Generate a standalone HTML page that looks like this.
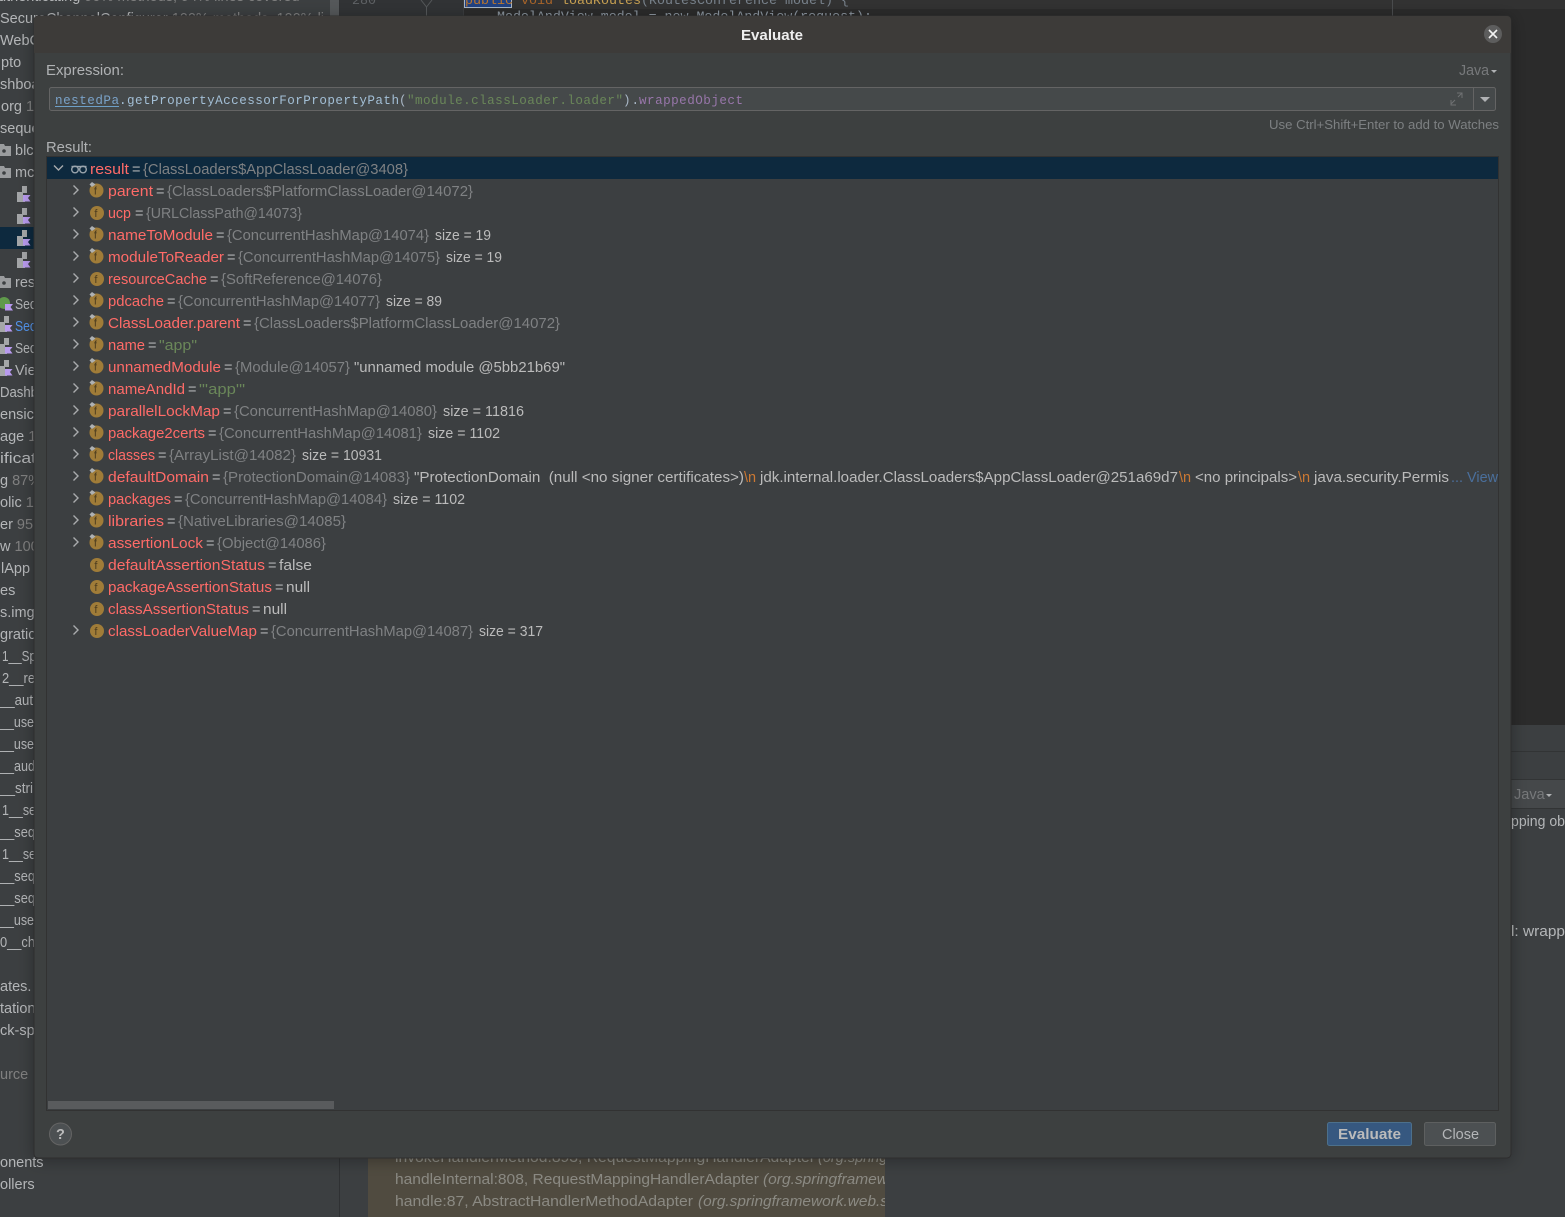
<!DOCTYPE html>
<html><head><meta charset="utf-8"><title>Evaluate</title>
<style>
html,body{margin:0;padding:0;background:#3c3f41;width:1565px;height:1217px;overflow:hidden}
svg{display:block;position:absolute;left:0;top:0}
text{font-family:"Liberation Sans","DejaVu Sans",sans-serif;font-size:14.5px;white-space:pre}
.t{fill:#b4b6b8}.g{fill:#808080}.d{fill:#7d8082}
.n{fill:#ff6b68}.e{fill:#b0b2b4}.v{fill:#7f8183}.s{fill:#bbbbbb}.q{fill:#6a8759}.o{fill:#cc7832}
.m{font-family:"Liberation Mono",monospace;font-size:12.6px}
.ed{font-family:"Liberation Mono",monospace;font-size:13.33px}
</style></head><body>
<svg width="1565" height="1217" viewBox="0 0 1565 1217" xmlns="http://www.w3.org/2000/svg">
<defs>
<filter id="sh" x="-3%" y="-3%" width="106%" height="106%"><feDropShadow dx="0" dy="2" stdDeviation="8" flood-color="#000" flood-opacity=".3"/></filter>
<g id="fi"><circle cx="0" cy="0" r="7" fill="#a07c38"/><text x="-2.6" y="4.200" style="font-size:11px" fill="#4d3d1f">f</text></g>
<g id="fp"><circle cx="-0.500" cy="-0.500" r="7" fill="#a07c38"/><text x="-3.100" y="3.700" style="font-size:11px" fill="#4d3d1f">f</text><path d="M-7.500-6.500l2.500-2.500 3.500 2.500-3.500 2.500z" fill="#aeb1b3"/></g>
<path id="ch" d="M-3-4.500l4.500 4.500-4.500 4.500" fill="none" stroke="#a9abad" stroke-width="1.4"/>
<g id="cl"><path d="M5 0h5v7H6v3h2v6H0V6h5z" fill="#a4a6a8"/><path d="M6 9h7.500l-2.500 3 2.500 3.500H6z" fill="#b89aee"/></g>
<g id="fo"><path d="M-1 0h5l1 2h6v10H-1z" fill="#9a9c9e"/><circle cx="4" cy="7" r="1.800" fill="#3c3f41"/></g>
</defs>

<!-- background -->
<rect width="1565" height="1217" fill="#3c3f41"/>
<rect x="330" y="0" width="9" height="16" fill="#55585a"/>
<rect x="339" y="0" width="1" height="1217" fill="#2f3133"/>
<rect x="340" y="0" width="1225" height="725" fill="#2b2b2b"/>
<rect x="340" y="0" width="1225" height="9" fill="#323232"/>
<rect x="340" y="0" width="123" height="16" fill="#313335"/>
<rect x="463" y="0" width="1" height="16" fill="#3a3c3e"/>
<rect x="1392" y="0" width="1" height="16" fill="#4a4c4e"/>
<rect x="464.500" y="-4" width="47" height="11.500" fill="#214283" stroke="#a9b7c6"/>
<text class="ed" x="465" y="4" fill="#b9762f">public</text>
<text class="ed" x="521" y="4" fill="#a8652a">void</text>
<text class="ed" x="561" y="4" fill="#c7a052">loadRoutes</text>
<text class="ed" x="641" y="4" fill="#78828c">(RoutesConference model) {</text>
<text class="ed" x="497" y="20" textLength="375" lengthAdjust="spacing" fill="#8c96a0">ModelAndView model = new ModelAndView(request);</text>
<text class="ed" x="352" y="4" fill="#606366">280</text>
<text class="ed" x="352" y="24" fill="#606366">281</text>
<path d="M421 0l5.500 7 5.500-7M426.500 7v9" fill="none" stroke="#55585a"/>
<rect x="1511" y="725" width="54" height="492" fill="#3c3f41"/>
<rect x="1511" y="751" width="54" height="1" fill="#323435"/>
<rect x="1511" y="779" width="54" height="29" fill="#45484a"/>
<rect x="1511" y="779" width="54" height="1" fill="#323435"/>
<rect x="1511" y="808" width="54" height="1" fill="#323435"/>
<text x="1514" y="799" fill="#77797b">Java</text><path d="M1546 794h6l-3 3z" fill="#b0b2b4"/>
<text class="t" x="1511" y="826" textLength="54" lengthAdjust="spacingAndGlyphs">pping ob</text>
<text class="t" x="1511" y="936" textLength="54" lengthAdjust="spacingAndGlyphs">l: wrapp</text>
<rect x="368" y="1150" width="517" height="67" fill="#504b40"/>
<g fill="#8b8a83">
<text x="395" y="1162" textLength="420" lengthAdjust="spacingAndGlyphs">invokeHandlerMethod:893, RequestMappingHandlerAdapter</text>
<text x="395" y="1184" textLength="364" lengthAdjust="spacingAndGlyphs">handleInternal:808, RequestMappingHandlerAdapter</text>
<text x="763" y="1184" font-style="italic" textLength="125" lengthAdjust="spacingAndGlyphs">(org.springframew</text>
<text x="395" y="1206" textLength="298" lengthAdjust="spacingAndGlyphs">handle:87, AbstractHandlerMethodAdapter</text>
<text x="698" y="1206" font-style="italic" textLength="190" lengthAdjust="spacingAndGlyphs">(org.springframework.web.s</text>
<text x="818" y="1162" font-style="italic">(org.spring</text>
</g>
<rect x="885" y="1150" width="680" height="67" fill="#3c3f41"/>

<!-- left tree -->
<rect x="0" y="227" width="34" height="22" fill="#0d293e"/>
<g class="t">
<text x="-10" y="1">authenticating <tspan fill="#808080">90% methods, 94% lines covered</tspan></text>
<text x="0" y="23">SecureChannelConfigurer <tspan fill="#808080">100% methods, 100% li</tspan></text>
<text x="0" y="45">WebC</text><text x="1" y="67">pto</text><text x="0" y="89">shboa</text><text x="1" y="111">org <tspan fill="#808080">1</tspan></text><text x="0" y="133">seque</text>
<text x="15" y="155">blc</text><text x="15" y="177">mc</text><text x="15" y="287">res</text><text x="15" y="309" textLength="21" lengthAdjust="spacingAndGlyphs">Sec</text>
<text x="15" y="331" textLength="21" lengthAdjust="spacingAndGlyphs" fill="#5394ec">Sec</text>
<text x="15" y="353" textLength="21" lengthAdjust="spacingAndGlyphs">Sec</text><text x="15" y="375">Vie</text><text x="0" y="397" textLength="38" lengthAdjust="spacingAndGlyphs">Dashb</text><text x="0" y="419">ensic</text><text x="0" y="441">age <tspan fill="#808080">1</tspan></text><text x="0" y="463" textLength="36" lengthAdjust="spacingAndGlyphs">ificat</text><text x="0" y="485">g <tspan fill="#808080">87%</tspan></text><text x="0" y="507">olic <tspan fill="#808080">1</tspan></text><text x="0" y="529">er <tspan fill="#808080">95%</tspan></text><text x="0" y="551">w <tspan fill="#808080">100</tspan></text><text x="1" y="573">lApp</text><text x="0" y="595">es</text><text x="0" y="617">s.img</text><text x="0" y="639">gratic</text>
<text x="2" y="661" textLength="34" lengthAdjust="spacingAndGlyphs">1__Sp</text><text x="2" y="683" textLength="33" lengthAdjust="spacingAndGlyphs">2__re</text><text x="0" y="705" textLength="33" lengthAdjust="spacingAndGlyphs">__aut</text><text x="0" y="727" textLength="34" lengthAdjust="spacingAndGlyphs">__use</text><text x="0" y="749" textLength="34" lengthAdjust="spacingAndGlyphs">__use</text><text x="0" y="771" textLength="35" lengthAdjust="spacingAndGlyphs">__aud</text><text x="0" y="793" textLength="33" lengthAdjust="spacingAndGlyphs">__stri</text><text x="2" y="815" textLength="34" lengthAdjust="spacingAndGlyphs">1__se</text><text x="0" y="837" textLength="35" lengthAdjust="spacingAndGlyphs">__seq</text><text x="2" y="859" textLength="34" lengthAdjust="spacingAndGlyphs">1__se</text><text x="0" y="881" textLength="35" lengthAdjust="spacingAndGlyphs">__seq</text><text x="0" y="903" textLength="35" lengthAdjust="spacingAndGlyphs">__seq</text><text x="0" y="925" textLength="34" lengthAdjust="spacingAndGlyphs">__use</text><text x="0" y="947" textLength="35" lengthAdjust="spacingAndGlyphs">0__ch</text><text x="0" y="991">ates.</text><text x="0" y="1013">tation</text><text x="0" y="1035">ck-sp</text>
<text x="0" y="1167">onents</text><text x="0" y="1189">ollers</text>
</g>
<text x="0" y="1079" fill="#808080">urce</text>
<use href="#fo" x="0" y="144"/><use href="#fo" x="0" y="166"/><use href="#fo" x="0" y="276"/>
<use href="#cl" x="17" y="186"/><use href="#cl" x="17" y="208"/><use href="#cl" x="17" y="230"/><use href="#cl" x="17" y="252"/>
<circle cx="4" cy="303" r="6" fill="#5f9a4b"/><path d="M5 304h8l-2.500 3 2.500 3.500H5z" fill="#b89aee"/>
<use href="#cl" x="-1" y="316"/><use href="#cl" x="-1" y="338"/><use href="#cl" x="-1" y="360"/>

<!-- dialog -->
<g filter="url(#sh)"><rect x="34" y="16" width="1477" height="1142" rx="4" fill="#3c3f41" stroke="#2d2d2d"/></g>
<path d="M34 53V20a4 4 0 0 1 4-4h1469a4 4 0 0 1 4 4v33z" fill="#3d3b39"/>
<text x="741" y="40" textLength="62" lengthAdjust="spacingAndGlyphs" fill="#eeeeee" font-weight="bold">Evaluate</text>
<circle cx="1493" cy="34" r="9" fill="#5d5d5d"/><path d="M1489 30l8 8M1497 30l-8 8" stroke="#f2f2f2" stroke-width="1.600" fill="none"/>

<text x="46" y="75" textLength="78" lengthAdjust="spacingAndGlyphs" class="e">Expression:</text>
<text x="1459" y="75" textLength="30" lengthAdjust="spacingAndGlyphs" fill="#77797b">Java</text><path d="M1491 70h6l-3 3z" fill="#b0b2b4"/>

<rect x="49.500" y="87.500" width="1446" height="23" rx="2" fill="#45494a" stroke="#646464"/>
<rect x="1473" y="88" width="1" height="22" fill="#646464"/>
<path d="M1480 97h10l-5 5z" fill="#b0b2b4"/>
<path d="M1451 104l4-4M1451 100v5h5M1462 93l-4 4M1457 93h5v5" fill="none" stroke="#6f7173"/>
<text class="m" x="55" y="104" textLength="64" lengthAdjust="spacing" fill="#7aa2c8">nestedPa</text>
<rect x="55" y="106" width="64" height="1" fill="#6d9fc7"/>
<text class="m" x="119" y="104" textLength="280" lengthAdjust="spacing" fill="#a3bfd6">.getPropertyAccessorForPropertyPath</text>
<text class="m" x="399" y="104" textLength="8" fill="#a9b7c6">(</text>
<text class="m" x="407" y="104" textLength="216" lengthAdjust="spacing" fill="#6a8759">"module.classLoader.loader"</text>
<text class="m" x="623" y="104" textLength="16" lengthAdjust="spacing" fill="#a9b7c6">).</text>
<text class="m" x="639" y="104" textLength="104" lengthAdjust="spacing" fill="#9876aa">wrappedObject</text>
<text x="1269" y="129" textLength="230" lengthAdjust="spacingAndGlyphs" style="font-size:13px" fill="#7d8082">Use Ctrl+Shift+Enter to add to Watches</text>
<text x="46" y="152" textLength="46" lengthAdjust="spacingAndGlyphs" class="e">Result:</text>

<rect x="46.500" y="156.500" width="1452" height="954" fill="#3c3f41" stroke="#323232"/>
<rect x="47" y="157" width="1451" height="22" fill="#0d293e"/>
<rect x="48" y="1101" width="286" height="8" fill="#595b5d"/>

<!-- tree rows -->
<path d="M54 165.500l4.500 4.500 4.500-4.500" fill="none" stroke="#a9abad" stroke-width="1.400"/>
<g fill="none" stroke="#9aa5ad" stroke-width="1.400"><circle cx="75" cy="169.500" r="3.300"/><circle cx="83" cy="169.500" r="3.300"/><path d="M71.500 166.500h15"/></g>
<text class="n" x="90" y="174" textLength="39" lengthAdjust="spacingAndGlyphs">result</text><text class="e" x="132" y="174">=</text><text class="v" x="143" y="174" textLength="265" lengthAdjust="spacingAndGlyphs">{ClassLoaders$AppClassLoader@3408}</text>

<use href="#ch" x="76.500" y="190"/><use href="#fp" x="97" y="191"/><text class="n" x="108" y="196" textLength="45" lengthAdjust="spacingAndGlyphs">parent</text><text class="e" x="156" y="196">=</text><text class="v" x="167" y="196" textLength="306" lengthAdjust="spacingAndGlyphs">{ClassLoaders$PlatformClassLoader@14072}</text>

<use href="#ch" x="76.500" y="212"/><use href="#fi" x="97" y="213"/><text class="n" x="108" y="218" textLength="23" lengthAdjust="spacingAndGlyphs">ucp</text><text class="e" x="135" y="218">=</text><text class="v" x="146" y="218" textLength="156" lengthAdjust="spacingAndGlyphs">{URLClassPath@14073}</text>

<use href="#ch" x="76.500" y="234"/><use href="#fp" x="97" y="235"/><text class="n" x="108" y="240" textLength="105" lengthAdjust="spacingAndGlyphs">nameToModule</text><text class="e" x="216" y="240">=</text><text class="v" x="227" y="240" textLength="202" lengthAdjust="spacingAndGlyphs">{ConcurrentHashMap@14074}</text><text class="s" x="435" y="240" textLength="56" lengthAdjust="spacingAndGlyphs">size = 19</text>

<use href="#ch" x="76.500" y="256"/><use href="#fp" x="97" y="257"/><text class="n" x="108" y="262" textLength="116" lengthAdjust="spacingAndGlyphs">moduleToReader</text><text class="e" x="227" y="262">=</text><text class="v" x="238" y="262" textLength="202" lengthAdjust="spacingAndGlyphs">{ConcurrentHashMap@14075}</text><text class="s" x="446" y="262" textLength="56" lengthAdjust="spacingAndGlyphs">size = 19</text>

<use href="#ch" x="76.500" y="278"/><use href="#fi" x="97" y="279"/><text class="n" x="108" y="284" textLength="99" lengthAdjust="spacingAndGlyphs">resourceCache</text><text class="e" x="210" y="284">=</text><text class="v" x="221" y="284" textLength="161" lengthAdjust="spacingAndGlyphs">{SoftReference@14076}</text>

<use href="#ch" x="76.500" y="300"/><use href="#fp" x="97" y="301"/><text class="n" x="108" y="306" textLength="56" lengthAdjust="spacingAndGlyphs">pdcache</text><text class="e" x="167" y="306">=</text><text class="v" x="178" y="306" textLength="202" lengthAdjust="spacingAndGlyphs">{ConcurrentHashMap@14077}</text><text class="s" x="386" y="306" textLength="56" lengthAdjust="spacingAndGlyphs">size = 89</text>

<use href="#ch" x="76.500" y="322"/><use href="#fp" x="97" y="323"/><text class="n" x="108" y="328" textLength="132" lengthAdjust="spacingAndGlyphs">ClassLoader.parent</text><text class="e" x="243" y="328">=</text><text class="v" x="254" y="328" textLength="306" lengthAdjust="spacingAndGlyphs">{ClassLoaders$PlatformClassLoader@14072}</text>

<use href="#ch" x="76.500" y="344"/><use href="#fp" x="97" y="345"/><text class="n" x="108" y="350" textLength="37" lengthAdjust="spacingAndGlyphs">name</text><text class="e" x="148" y="350">=</text><text class="q" x="159" y="350" textLength="38" lengthAdjust="spacingAndGlyphs">"app"</text>

<use href="#ch" x="76.500" y="366"/><use href="#fp" x="97" y="367"/><text class="n" x="108" y="372" textLength="113" lengthAdjust="spacingAndGlyphs">unnamedModule</text><text class="e" x="224" y="372">=</text><text class="v" x="235" y="372" textLength="115" lengthAdjust="spacingAndGlyphs">{Module@14057}</text><text class="s" x="354" y="372" textLength="211" lengthAdjust="spacingAndGlyphs">"unnamed module @5bb21b69"</text>

<use href="#ch" x="76.500" y="388"/><use href="#fp" x="97" y="389"/><text class="n" x="108" y="394" textLength="77" lengthAdjust="spacingAndGlyphs">nameAndId</text><text class="e" x="188" y="394">=</text><text class="q" x="199" y="394" textLength="46" lengthAdjust="spacingAndGlyphs">"'app'"</text>

<use href="#ch" x="76.500" y="410"/><use href="#fp" x="97" y="411"/><text class="n" x="108" y="416" textLength="112" lengthAdjust="spacingAndGlyphs">parallelLockMap</text><text class="e" x="223" y="416">=</text><text class="v" x="234" y="416" textLength="203" lengthAdjust="spacingAndGlyphs">{ConcurrentHashMap@14080}</text><text class="s" x="443" y="416" textLength="81" lengthAdjust="spacingAndGlyphs">size = 11816</text>

<use href="#ch" x="76.500" y="432"/><use href="#fp" x="97" y="433"/><text class="n" x="108" y="438" textLength="97" lengthAdjust="spacingAndGlyphs">package2certs</text><text class="e" x="208" y="438">=</text><text class="v" x="219" y="438" textLength="203" lengthAdjust="spacingAndGlyphs">{ConcurrentHashMap@14081}</text><text class="s" x="428" y="438" textLength="72" lengthAdjust="spacingAndGlyphs">size = 1102</text>

<use href="#ch" x="76.500" y="454"/><use href="#fp" x="97" y="455"/><text class="n" x="108" y="460" textLength="47" lengthAdjust="spacingAndGlyphs">classes</text><text class="e" x="158" y="460">=</text><text class="v" x="169" y="460" textLength="127" lengthAdjust="spacingAndGlyphs">{ArrayList@14082}</text><text class="s" x="302" y="460" textLength="80" lengthAdjust="spacingAndGlyphs">size = 10931</text>

<use href="#ch" x="76.500" y="476"/><use href="#fp" x="97" y="477"/><text class="n" x="108" y="482" textLength="101" lengthAdjust="spacingAndGlyphs">defaultDomain</text><text class="e" x="212" y="482">=</text><text class="v" x="223" y="482" textLength="187" lengthAdjust="spacingAndGlyphs">{ProtectionDomain@14083}</text><text class="s" x="414" y="482" textLength="330" lengthAdjust="spacingAndGlyphs">"ProtectionDomain  (null &lt;no signer certificates&gt;)</text><text class="o" x="744" y="482">\n</text><text class="s" x="760" y="482" textLength="418" lengthAdjust="spacingAndGlyphs">jdk.internal.loader.ClassLoaders$AppClassLoader@251a69d7</text><text class="o" x="1179" y="482">\n</text><text class="s" x="1195" y="482" textLength="102" lengthAdjust="spacingAndGlyphs">&lt;no principals&gt;</text><text class="o" x="1298" y="482">\n</text><text class="s" x="1314" y="482" textLength="135" lengthAdjust="spacingAndGlyphs">java.security.Permis</text><text x="1451" y="482" textLength="47" lengthAdjust="spacingAndGlyphs" fill="#4a6f9c">... View</text>

<use href="#ch" x="76.500" y="498"/><use href="#fp" x="97" y="499"/><text class="n" x="108" y="504" textLength="63" lengthAdjust="spacingAndGlyphs">packages</text><text class="e" x="174" y="504">=</text><text class="v" x="185" y="504" textLength="202" lengthAdjust="spacingAndGlyphs">{ConcurrentHashMap@14084}</text><text class="s" x="393" y="504" textLength="72" lengthAdjust="spacingAndGlyphs">size = 1102</text>

<use href="#ch" x="76.500" y="520"/><use href="#fp" x="97" y="521"/><text class="n" x="108" y="526" textLength="56" lengthAdjust="spacingAndGlyphs">libraries</text><text class="e" x="167" y="526">=</text><text class="v" x="178" y="526" textLength="168" lengthAdjust="spacingAndGlyphs">{NativeLibraries@14085}</text>

<use href="#ch" x="76.500" y="542"/><use href="#fp" x="97" y="543"/><text class="n" x="108" y="548" textLength="95" lengthAdjust="spacingAndGlyphs">assertionLock</text><text class="e" x="206" y="548">=</text><text class="v" x="217" y="548" textLength="109" lengthAdjust="spacingAndGlyphs">{Object@14086}</text>

<use href="#fi" x="97" y="565"/><text class="n" x="108" y="570" textLength="157" lengthAdjust="spacingAndGlyphs">defaultAssertionStatus</text><text class="e" x="268" y="570">=</text><text class="s" x="279" y="570" textLength="33" lengthAdjust="spacingAndGlyphs">false</text>

<use href="#fi" x="97" y="587"/><text class="n" x="108" y="592" textLength="164" lengthAdjust="spacingAndGlyphs">packageAssertionStatus</text><text class="e" x="275" y="592">=</text><text class="s" x="286" y="592" textLength="24" lengthAdjust="spacingAndGlyphs">null</text>

<use href="#fi" x="97" y="609"/><text class="n" x="108" y="614" textLength="141" lengthAdjust="spacingAndGlyphs">classAssertionStatus</text><text class="e" x="252" y="614">=</text><text class="s" x="263" y="614" textLength="24" lengthAdjust="spacingAndGlyphs">null</text>

<use href="#ch" x="76.500" y="630"/><use href="#fi" x="97" y="631"/><text class="n" x="108" y="636" textLength="149" lengthAdjust="spacingAndGlyphs">classLoaderValueMap</text><text class="e" x="260" y="636">=</text><text class="v" x="271" y="636" textLength="202" lengthAdjust="spacingAndGlyphs">{ConcurrentHashMap@14087}</text><text class="s" x="479" y="636" textLength="64" lengthAdjust="spacingAndGlyphs">size = 317</text>

<!-- footer -->
<circle cx="60.500" cy="1134" r="11" fill="#4c5052" stroke="#646464"/>
<text x="56" y="1139" fill="#bbbbbb" font-weight="bold">?</text>
<rect x="1327.500" y="1122.500" width="84" height="23" rx="2" fill="#365880" stroke="#4c708c"/>
<text x="1338" y="1139" textLength="63" lengthAdjust="spacingAndGlyphs" fill="#bbbbbb" font-weight="bold">Evaluate</text>
<rect x="1424.500" y="1122.500" width="71" height="23" rx="2" fill="#4c5052" stroke="#5e6060"/>
<text x="1442" y="1139" textLength="37" lengthAdjust="spacingAndGlyphs" fill="#b4b6b8">Close</text>
</svg>
</body></html>
